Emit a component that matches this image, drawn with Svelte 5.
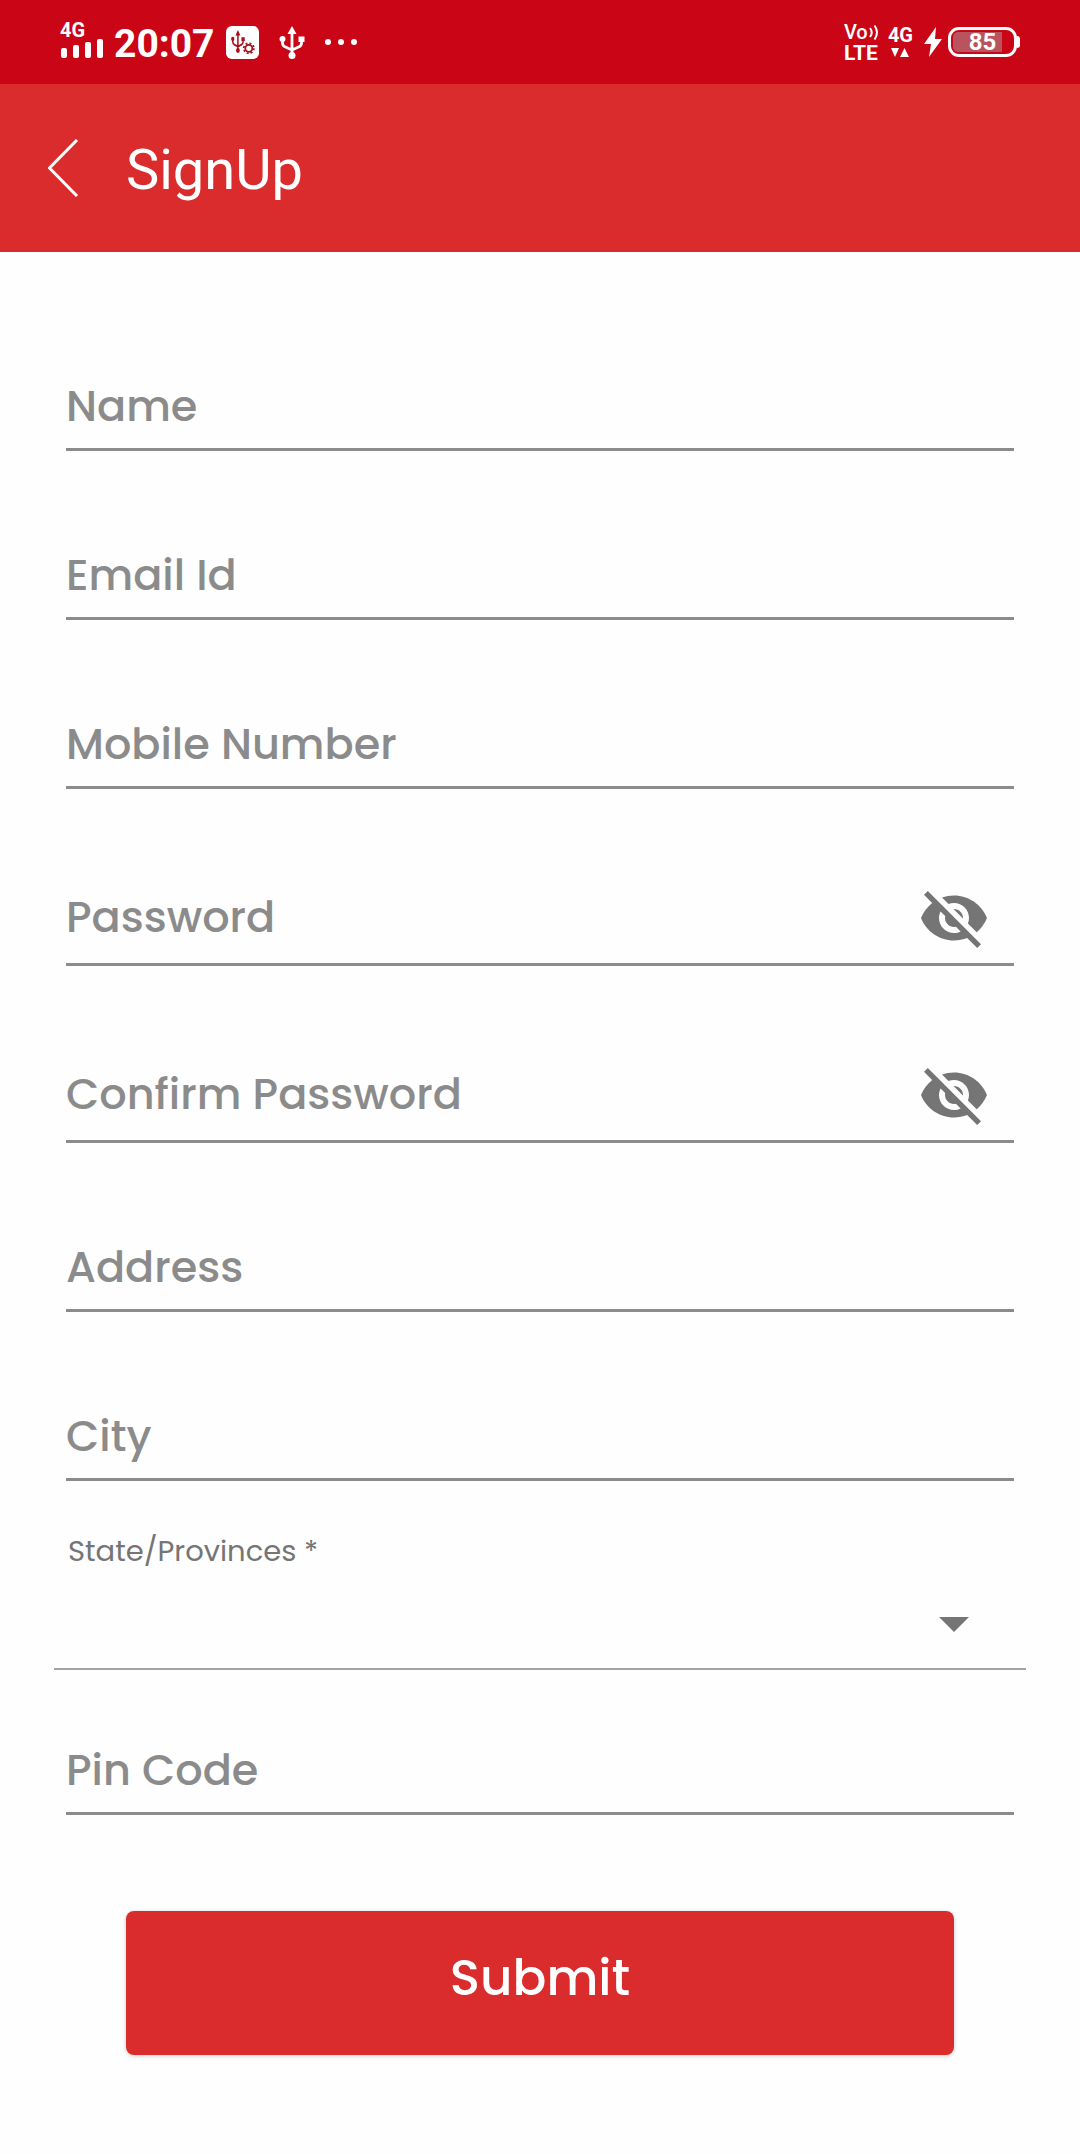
<script lang="ts">
  type Field = {
    id: string;
    label: string;
    type: 'text' | 'email' | 'tel' | 'password';
  };

  const fields: Field[] = [
    { id: 'name', label: 'Name', type: 'text' },
    { id: 'email', label: 'Email Id', type: 'email' },
    { id: 'mobile', label: 'Mobile Number', type: 'tel' },
    { id: 'password', label: 'Password', type: 'password' },
    { id: 'confirm', label: 'Confirm Password', type: 'password' },
    { id: 'address', label: 'Address', type: 'text' },
    { id: 'city', label: 'City', type: 'text' }
  ];

  let shown: Record<string, boolean> = $state({ password: false, confirm: false });
</script>

{#snippet usb()}
  <g fill="none" stroke="currentColor" stroke-width="2.8">
    <path d="M13 6v22M3.500 13v4q0 3 3 4l6.500 3M22.500 13v4q0 3-3 4l-6.500 3" />
  </g>
  <path d="M13 0l4.500 8h-9z" fill="currentColor" />
  <circle cx="3.500" cy="13" r="3" fill="currentColor" />
  <rect x="19.500" y="10.500" width="6" height="5.500" fill="currentColor" />
  <circle cx="13" cy="29.500" r="3.500" fill="currentColor" />
{/snippet}

<div class="page">
  <div class="status">
    <div class="cluster">
      <div class="stack signal">
        <span class="tiny">4G</span>
        <svg width="43" height="20" viewBox="0 0 43 20" aria-hidden="true">
          <g fill="currentColor">
            <rect x="1" y="10" width="6" height="10" rx="2" />
            <rect x="13" y="7" width="6" height="13" rx="2" />
            <rect x="25" y="4" width="6" height="16" rx="2" />
            <rect x="37" y="1" width="6" height="19" rx="2" />
          </g>
        </svg>
      </div>
      <span class="time">20:07</span>
      <svg class="debug" width="33" height="33" viewBox="0 0 34 34" aria-hidden="true">
        <rect width="34" height="34" rx="6" fill="#fff" />
        <g transform="translate(5 4) scale(.56 .72)">{@render usb()}</g>
        <circle cx="23.500" cy="23" r="6" fill="#fff" />
        <circle cx="23.500" cy="23" r="3.600" fill="none" stroke="currentColor" stroke-width="1.800" />
        <circle cx="23.500" cy="23" r="5.200" fill="none" stroke="currentColor" stroke-width="1.800" stroke-dasharray="2 2.084" />
      </svg>
      <svg class="usb" width="26" height="33" viewBox="0 0 26 33" aria-hidden="true">{@render usb()}</svg>
      <svg width="34" height="8" viewBox="0 0 34 8" aria-hidden="true">
        <g fill="currentColor">
          <circle cx="4" cy="4" r="3" />
          <circle cx="17" cy="4" r="3" />
          <circle cx="30" cy="4" r="3" />
        </g>
      </svg>
    </div>

    <div class="cluster">
      <div class="stack volte">
        <span class="vo">Vo<svg width="12" height="16" viewBox="0 0 12 16" aria-hidden="true">
            <path d="M2 4q3.500 4.500 0 9M6.500 1.500q5 7 0 14" fill="none" stroke="currentColor" stroke-width="2" />
          </svg></span>
        <span class="lte">LTE</span>
      </div>
      <div class="stack data">
        <span class="tiny">4G</span>
        <svg width="18" height="10" viewBox="0 0 18 10" aria-hidden="true">
          <path d="M0 1h8l-4 9zM9 10h9l-4.500-9z" fill="currentColor" />
        </svg>
      </div>
      <svg class="bolt" width="18" height="30" viewBox="0 0 18 30" aria-hidden="true">
        <path d="M12 0L0 17h7L5 30 18 12h-7z" fill="currentColor" />
      </svg>
      <div class="battery">
        <div class="shell"><span class="level">85</span></div>
        <span class="nub"></span>
      </div>
    </div>
  </div>

  <header>
    <button class="back" type="button" aria-label="Back">
      <svg width="32" height="58" viewBox="0 0 32 58" aria-hidden="true">
        <path d="M29 1L1.500 29 29 57" fill="none" stroke="currentColor" stroke-width="3" stroke-linejoin="round" />
      </svg>
    </button>
    <h1>SignUp</h1>
  </header>

  <form onsubmit={(event) => event.preventDefault()}>
    {#each fields as field (field.id)}
      <div class="field" class:secret={field.type === 'password'}>
        <input
          id={field.id}
          type={shown[field.id] ? 'text' : field.type}
          placeholder=" "
        />
        <label for={field.id}>{field.label}</label>
        {#if field.type === 'password'}
          <button
            class="toggle"
            type="button"
            aria-label="Show {field.label}"
            aria-pressed={shown[field.id]}
            onclick={() => (shown[field.id] = !shown[field.id])}
          >
            <svg width="72" height="72" viewBox="0 0 24 24" aria-hidden="true">
              <path
                fill="currentColor"
                d="M12 7c2.760 0 5 2.240 5 5 0 .65-.13 1.260-.36 1.830l2.920 2.920c1.510-1.260 2.700-2.890 3.430-4.750-1.730-4.390-6-7.500-11-7.500-1.400 0-2.740.25-3.980.7l2.160 2.160C10.740 7.130 11.350 7 12 7zM2 4.270l2.280 2.280.46.46C3.080 8.300 1.780 10.020 1 12c1.730 4.390 6 7.500 11 7.500 1.550 0 3.030-.3 4.380-.84l.42.42L19.730 22 21 20.730 3.270 3 2 4.270zM7.530 9.800l1.550 1.550c-.05.21-.08.43-.08.65 0 1.660 1.340 3 3 3 .22 0 .44-.03.65-.08l1.550 1.550c-.67.33-1.410.53-2.200.53-2.760 0-5-2.240-5-5 0-.79.2-1.530.53-2.200zm4.310-.78l3.150 3.150.02-.16c0-1.660-1.340-3-3-3l-.17.01z"
              />
            </svg>
          </button>
        {/if}
      </div>
    {/each}

    <div class="choice">
      <label for="state">State/Provinces *</label>
      <div class="picker">
        <select id="state" required>
          <option value=""></option>
        </select>
        <svg width="30" height="15" viewBox="0 0 30 15" aria-hidden="true">
          <path d="M0 0h30L15 15z" fill="currentColor" />
        </svg>
      </div>
    </div>

    <div class="field">
      <input id="pin" type="text" inputmode="numeric" placeholder=" " />
      <label for="pin">Pin Code</label>
    </div>

    <button class="submit" type="submit">Submit</button>
  </form>
</div>

<style>
  :global(body) {
    background: #fefefe;
  }

  .page {
    min-height: 100vh;
    font-family: Poppins, Inter, 'Open Sans', sans-serif;
    color: #757575;
  }

  svg {
    display: block;
    flex: none;
  }

  button {
    padding: 0;
    border: 0;
    background: none;
    color: inherit;
    font: inherit;
    cursor: pointer;
  }

  .status {
    display: flex;
    align-items: center;
    justify-content: space-between;
    height: 84px;
    padding: 0 60px;
    box-sizing: border-box;
    background: #ca0516;
    color: #fff;
    font-family: Roboto, sans-serif;
    font-weight: 700;
  }

  .cluster {
    display: flex;
    align-items: center;
  }

  .stack {
    display: flex;
    flex-direction: column;
  }

  .signal {
    padding-bottom: 4px;
  }

  .tiny {
    font-size: 20px;
    line-height: 16px;
  }

  .time {
    margin: 0 11px;
    padding-top: 3px;
    font-size: 39px;
    line-height: 48px;
  }

  .debug {
    color: #a5101c;
  }

  .usb {
    margin: 0 19px 0 20px;
  }

  .volte {
    width: 36px;
    margin-right: 8px;
  }

  .vo {
    display: flex;
    align-items: center;
    font-size: 20px;
    font-weight: 500;
    line-height: 22px;
  }

  .lte {
    font-size: 21px;
    line-height: 20px;
  }

  .data {
    align-items: center;
    gap: 4px;
    margin-right: 11px;
  }

  .bolt {
    margin-right: 6px;
  }

  .battery {
    display: flex;
    align-items: center;
  }

  .shell {
    width: 69px;
    height: 30px;
    box-sizing: border-box;
    padding: 2px;
    border: 3px solid #fff;
    border-radius: 11px;
  }

  .level {
    display: block;
    height: 20px;
    border-radius: 5px 0 0 5px;
    background: linear-gradient(90deg, #b9545e 83%, transparent 83%);
    font-size: 24px;
    line-height: 20px;
    text-align: center;
  }

  .nub {
    width: 3px;
    height: 12px;
    border-radius: 0 4px 4px 0;
    background: #fff;
  }

  header {
    display: flex;
    align-items: center;
    gap: 46px;
    height: 168px;
    padding: 0 48px;
    background: #da2c2c;
    color: #fff;
  }

  h1 {
    margin: 0;
    padding-top: 4px;
    font: 400 56px/72px Roboto, sans-serif;
  }

  form {
    display: flex;
    flex-direction: column;
    gap: 80px;
    padding: 110px 66px 100px;
  }

  .field {
    display: grid;
    grid-template-columns: 1fr auto;
    align-items: center;
    height: 89px;
    padding-top: 1px;
    box-sizing: border-box;
    border-bottom: 3px solid #8b8b8b;
  }

  .secret {
    height: 97px;
  }

  input,
  .field label {
    grid-row: 1;
    grid-column: 1;
    font-size: 43px;
    line-height: 56px;
  }

  input {
    width: 100%;
    min-width: 0;
    height: 100%;
    padding: 0;
    border: 0;
    outline: 0;
    background: none;
    color: #333;
    font-family: inherit;
  }

  .field label {
    color: #8b8b8b;
    font-weight: 500;
    pointer-events: none;
  }

  input:not(:placeholder-shown) + label {
    visibility: hidden;
  }

  .toggle {
    grid-row: 1;
    grid-column: 2;
    margin-right: 24px;
    padding-top: 3px;
  }

  .choice {
    display: flex;
    flex-direction: column;
    gap: 16px;
    margin: -24px -12px;
  }

  .choice label {
    padding-left: 14px;
    font-size: 29px;
    line-height: 28px;
  }

  .picker {
    display: grid;
    align-items: center;
    height: 87px;
    border-bottom: 2px solid #a3a3a3;
  }

  .picker > * {
    grid-area: 1 / 1;
  }

  .picker svg {
    justify-self: end;
    margin-right: 57px;
    pointer-events: none;
  }

  select {
    width: 100%;
    height: 100%;
    padding: 0 14px;
    border: 0;
    outline: 0;
    appearance: none;
    background: none;
    color: #333;
    font: inherit;
    font-size: 43px;
  }

  .submit {
    margin: 16px 60px 0;
    padding: 31px 0 41px;
    border-radius: 8px;
    background: #da2c2c;
    box-shadow: 0 1px 4px #0003;
    color: #fff;
    font-size: 50px;
    font-weight: 500;
    line-height: 72px;
  }
</style>
